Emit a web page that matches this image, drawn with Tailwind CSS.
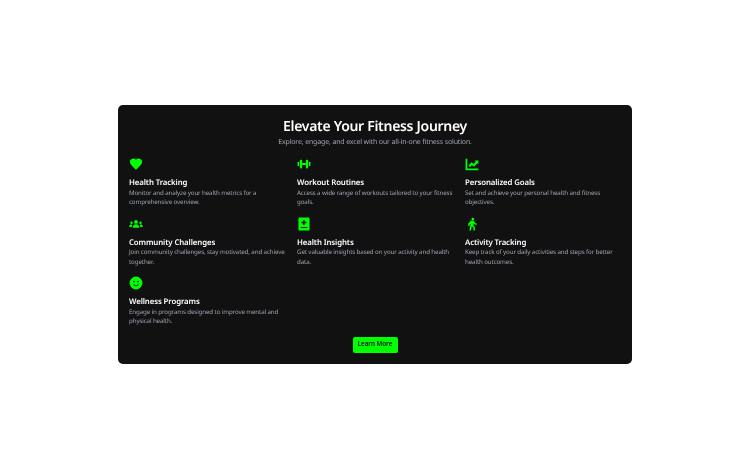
<!DOCTYPE html>
<html>
<head>
<meta charset="utf-8">
<script src="https://cdn.jsdelivr.net/npm/@tailwindcss/browser@4"></script>
</head>
<body class="bg-white font-['Noto_Sans',sans-serif] [text-rendering:geometricPrecision]">
<div class="w-[750px] h-[469px] flex items-center justify-center">
  <section class="w-[514px] h-[259px] bg-[#111111] rounded-[5px] pt-[12px] px-[11px] flex flex-col blur-[0.3px]">
    <h1 class="text-center text-white font-semibold text-[14px] tracking-[-0.3px] leading-[20px]">Elevate Your Fitness Journey</h1>
    <p class="text-center text-[#9ca3af] text-[7px] tracking-[-0.15px] leading-[11px]">Explore, engage, and excel with our all-in-one fitness solution.</p>
    <div class="grid grid-cols-3 gap-x-[12px] mt-[9px]">
      <div class="h-[59.5px]">
        <svg class="w-[14px] h-[14px] text-[#00ff00]" viewBox="0 0 24 24" fill="currentColor"><path d="M12 21.8l-1.6-1.4C5 15.5 1.5 12.3 1.5 8.3 1.5 5 4 2.5 7.3 2.5c1.8 0 3.6.9 4.7 2.2 1.100-1.300 2.900-2.200 4.700-2.200C20 2.500 22.500 5 22.500 8.300c0 4-3.500 7.200-8.900 12.100z"/></svg>
        <h2 class="text-white font-semibold text-[7.8px] tracking-[-0.1px] leading-[8.5px] mt-[8px]">Health Tracking</h2>
        <p class="text-[#9ca3af] text-[6.2px] tracking-[-0.12px] leading-[9.5px]">Monitor and analyze your health metrics for a comprehensive overview.</p>
      </div>
      <div class="h-[59.5px]">
        <svg class="w-[14px] h-[14px] text-[#00ff00]" viewBox="0 0 24 24" fill="currentColor"><rect x="1" y="8" width="2.600" height="8" rx="1.200"/><rect x="5" y="4.500" width="3.800" height="15" rx="1.500"/><rect x="8.800" y="10.300" width="6.400" height="3.400"/><rect x="15.200" y="4.500" width="3.800" height="15" rx="1.500"/><rect x="20.400" y="8" width="2.600" height="8" rx="1.200"/></svg>
        <h2 class="text-white font-semibold text-[7.8px] tracking-[-0.1px] leading-[8.5px] mt-[8px]">Workout Routines</h2>
        <p class="text-[#9ca3af] text-[6.2px] tracking-[-0.12px] leading-[9.5px]">Access a wide range of workouts tailored to your fitness goals.</p>
      </div>
      <div class="h-[59.5px]">
        <svg class="w-[14px] h-[14px] text-[#00ff00]" viewBox="0 0 24 24" fill="currentColor"><path d="M1 3h3v16.500h19V22.500H1z"/><path d="M6 15l5-6 4 3 3.500-4L16.500 6H23v6.500l-2-2-5.500 6.300-4-3-3 3.700z"/></svg>
        <h2 class="text-white font-semibold text-[7.8px] tracking-[-0.1px] leading-[8.5px] mt-[8px]">Personalized Goals</h2>
        <p class="text-[#9ca3af] text-[6.2px] tracking-[-0.12px] leading-[9.5px]">Set and achieve your personal health and fitness objectives.</p>
      </div>
      <div class="h-[59.5px]">
        <svg class="w-[14px] h-[14px] text-[#00ff00]" viewBox="0 0 24 24" fill="currentColor"><circle cx="12" cy="8.500" r="3.200"/><circle cx="4.300" cy="10" r="2.200"/><circle cx="19.700" cy="10" r="2.200"/><path d="M6.500 18.500v-2c0-2.300 2.400-4 5.500-4s5.500 1.700 5.500 4v2z"/><path d="M0.500 17v-1.500c0-1.500 1.700-2.700 3.800-2.700.5 0 .9.100 1.300.2-.5.900-.7 1.700-.7 2.800V17z"/><path d="M23.500 17v-1.500c0-1.500-1.700-2.700-3.800-2.700-.5 0-.9.100-1.300.2.500.900.700 1.700.700 2.800V17z"/></svg>
        <h2 class="text-white font-semibold text-[7.8px] tracking-[-0.1px] leading-[8.5px] mt-[8px]">Community Challenges</h2>
        <p class="text-[#9ca3af] text-[6.2px] tracking-[-0.12px] leading-[9.5px]">Join community challenges, stay motivated, and achieve together.</p>
      </div>
      <div class="h-[59.5px]">
        <svg class="w-[14px] h-[14px] text-[#00ff00]" viewBox="0 0 24 24" fill="currentColor"><path fill-rule="evenodd" d="M4 1h16a1.500 1.500 0 011.500 1.500v19A1.500 1.500 0 0120 23H4a1.500 1.500 0 01-1.500-1.500v-19A1.500 1.500 0 014 1zM10.500 5v3h-3v2.500h3v3H13v-3h3V8h-3V5zM6.500 17v2h11v-2z"/></svg>
        <h2 class="text-white font-semibold text-[7.8px] tracking-[-0.1px] leading-[8.5px] mt-[8px]">Health Insights</h2>
        <p class="text-[#9ca3af] text-[6.2px] tracking-[-0.12px] leading-[9.5px]">Get valuable insights based on your activity and health data.</p>
      </div>
      <div class="h-[59.5px]">
        <svg class="w-[14px] h-[14px] text-[#00ff00]" viewBox="0 0 24 24" fill="currentColor"><circle cx="13.500" cy="3.500" r="2.400"/><path d="M10 6.500l3.500-.500c.9 0 1.600.5 2 1.200l1.300 2.300c.6 1 1.800 1.700 3.200 1.700V13.500c-2 0-3.800-.8-5-2.200l-.6 3.200 2.600 2.500V23h-2.600v-5l-2.500-2.300L10.200 23H7.500l2.100-11.200-1.500.7V15.500H5.500V11z"/></svg>
        <h2 class="text-white font-semibold text-[7.8px] tracking-[-0.1px] leading-[8.5px] mt-[8px]">Activity Tracking</h2>
        <p class="text-[#9ca3af] text-[6.2px] tracking-[-0.12px] leading-[9.5px]">Keep track of your daily activities and steps for better health outcomes.</p>
      </div>
      <div class="h-[59.5px]">
        <svg class="w-[14px] h-[14px] text-[#00ff00]" viewBox="0 0 24 24" fill="currentColor"><path fill-rule="evenodd" d="M12 1a11 11 0 100 22 11 11 0 000-22zM8.500 8a1.500 1.500 0 110 3 1.500 1.500 0 010-3zm7 0a1.500 1.500 0 110 3 1.500 1.500 0 010-3zM7 14h1.600a3.700 3.700 0 006.800 0H17a5.300 5.300 0 01-10 0z"/></svg>
        <h2 class="text-white font-semibold text-[7.8px] tracking-[-0.1px] leading-[8.5px] mt-[8px]">Wellness Programs</h2>
        <p class="text-[#9ca3af] text-[6.2px] tracking-[-0.12px] leading-[9.5px]">Engage in programs designed to improve mental and physical health.</p>
      </div>
    </div>
    <div class="flex justify-center mt-[1px]">
      <button class="w-[45px] h-[16px] bg-[#00ff00] rounded-[2px] text-[#111111] text-[6.2px] font-semibold leading-none">Learn More</button>
    </div>
  </section>
</div>
</body>
</html>
